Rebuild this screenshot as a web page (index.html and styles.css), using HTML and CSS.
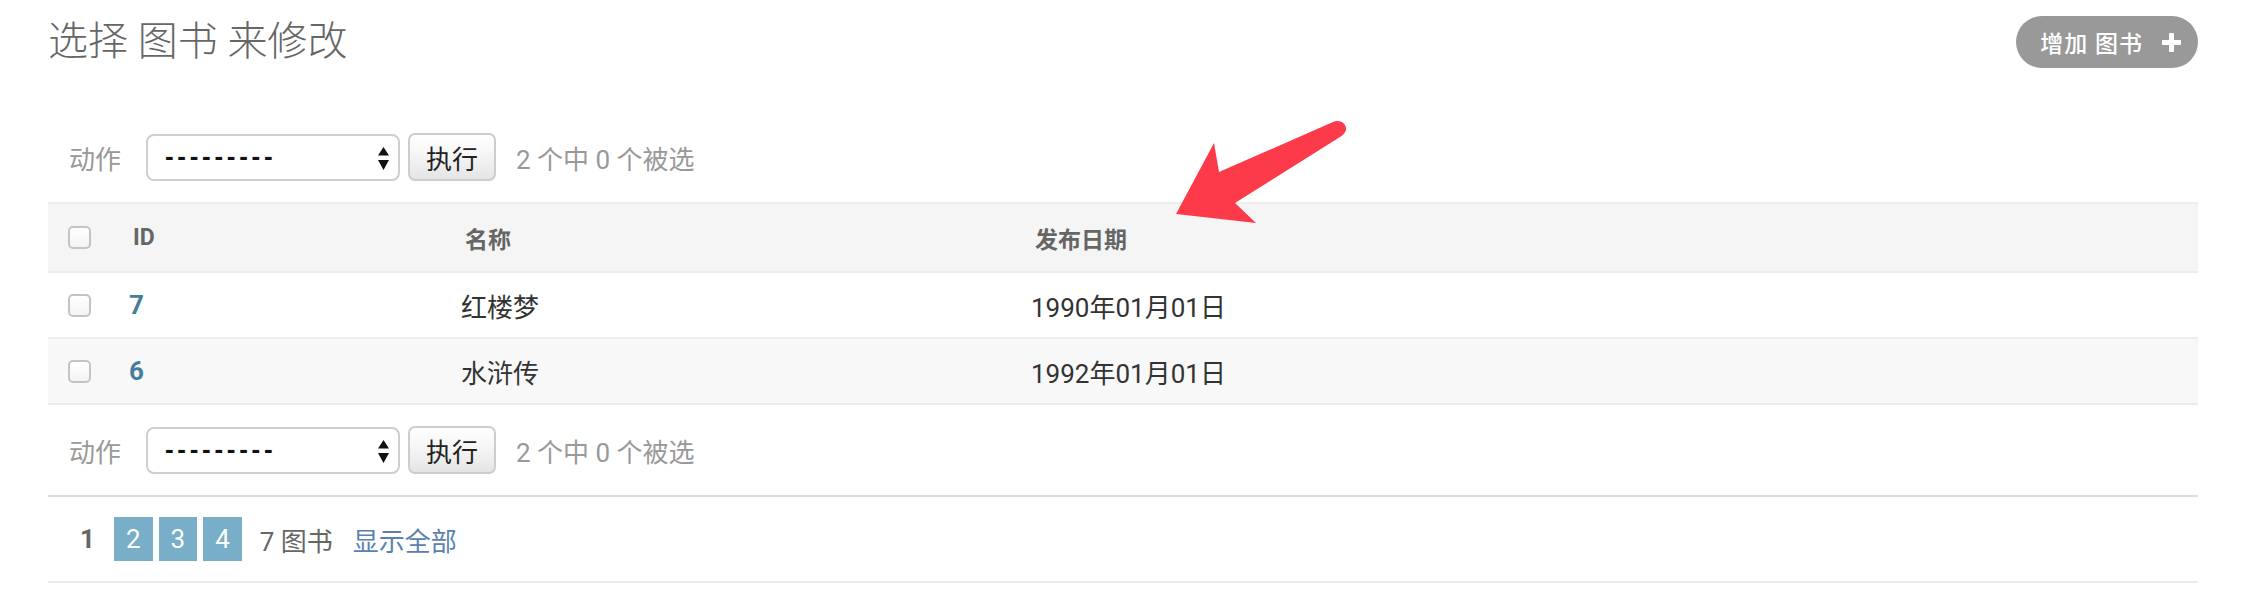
FILE: index.html
```html
<!DOCTYPE html>
<html lang="zh-CN">
<head>
<meta charset="utf-8">
<title>选择 图书 来修改</title>
<link rel="stylesheet" href="styles.css">
</head>
<body>
<div class="page">
  <header class="top">
    <h1 class="title">选择 图书 来修改</h1>
    <a class="addlink" href="#">增加 图书
      <svg class="plus" viewBox="0 0 19 19" width="19" height="19" aria-hidden="true"><path d="M7 0.8 Q7 0 7.8 0 H11.2 Q12 0 12 0.8 V7 H18.2 Q19 7 19 7.8 V11.2 Q19 12 18.2 12 H12 V18.2 Q12 19 11.2 19 H7.8 Q7 19 7 18.2 V12 H0.8 Q0 12 0 11.2 V7.8 Q0 7 0.8 7 H7 Z" fill="#fff"/></svg>
    </a>
  </header>

  <div class="actions">
    <span class="act-label">动作</span>
    <span class="select">
      <span class="dashes">---------</span>
      <svg class="updown" viewBox="0 0 11 23" width="11" height="23" aria-hidden="true"><path d="M0 8.5 L5.5 0 L11 8.5 Z M0 13 L11 13 L5.5 23 Z" fill="#111"/></svg>
    </span>
    <button class="go" type="button">执行</button>
    <span class="counter">2 个中 0 个被选</span>
  </div>

  <table class="result">
    <colgroup>
      <col class="c-cb"><col class="c-id"><col class="c-name"><col>
    </colgroup>
    <thead>
      <tr>
        <th class="cb"><input class="check" type="checkbox"></th>
        <th>ID</th>
        <th>名称</th>
        <th>发布日期</th>
      </tr>
    </thead>
    <tbody>
      <tr class="row1">
        <td class="cb"><input class="check" type="checkbox"></td>
        <td><a class="idlink" href="#">7</a></td>
        <td>红楼梦</td>
        <td>1990年01月01日</td>
      </tr>
      <tr class="row2">
        <td class="cb"><input class="check" type="checkbox"></td>
        <td><a class="idlink" href="#">6</a></td>
        <td>水浒传</td>
        <td>1992年01月01日</td>
      </tr>
    </tbody>
  </table>

  <div class="actions">
    <span class="act-label">动作</span>
    <span class="select">
      <span class="dashes">---------</span>
      <svg class="updown" viewBox="0 0 11 23" width="11" height="23" aria-hidden="true"><path d="M0 8.5 L5.5 0 L11 8.5 Z M0 13 L11 13 L5.5 23 Z" fill="#111"/></svg>
    </span>
    <button class="go" type="button">执行</button>
    <span class="counter">2 个中 0 个被选</span>
  </div>

  <div class="paginator">
    <span class="this-page">1</span>
    <a class="pg" href="#">2</a>
    <a class="pg" href="#">3</a>
    <a class="pg" href="#">4</a>
    <span class="total">7 图书</span>
    <a class="showall" href="#">显示全部</a>
  </div>

  <svg class="arrow" viewBox="0 0 180 110" width="180" height="110" aria-hidden="true">
    <path d="M6 96 L44 25 L49 54 L163 4 C170 1 177 6 176 12 C175 15 173 17 170 19 L65 85 L86 105 Z" fill="#fd3a4a"/>
  </svg>
</div>
</body>
</html>
```

FILE: styles.css
```css
* { box-sizing: border-box; }

html, body {
  margin: 0;
  padding: 0;
  background: #fff;
}

body {
  font-family: Roboto, "Noto Sans CJK SC", sans-serif;
  color: #333;
}

.page {
  position: relative;
  padding: 0 50px 0 48px;
}

/* header */
.top {
  display: flex;
  align-items: flex-start;
  justify-content: space-between;
  height: 112px;
  padding-top: 16px;
}

.title {
  margin: 0;
  height: 52px;
  line-height: 52px;
  font-size: 40px;
  font-weight: 300;
  color: #666;
  white-space: pre;
}

.addlink {
  display: flex;
  align-items: center;
  height: 52px;
  padding: 0 17px 0 24px;
  border-radius: 26px;
  background: #999;
  color: #fff;
  text-decoration: none;
  font-size: 23px;
  font-weight: 500;
  letter-spacing: 1px;
}

.plus {
  margin-left: 19px;
  display: block;
}

/* action bars */
.actions {
  display: flex;
  align-items: center;
  height: 90px;
  padding-left: 21px;
  color: #999;
  font-size: 26px;
}

.act-label {
  color: #999;
  margin-right: 25px;
}

.select {
  position: relative;
  display: flex;
  align-items: center;
  width: 254px;
  height: 47px;
  padding-left: 17px;
  border: 2px solid #cfcfcf;
  border-radius: 8px;
  background: #fff;
}

.dashes {
  font-family: "Liberation Sans", sans-serif;
  font-size: 26px;
  font-weight: 700;
  letter-spacing: 3.7px;
  color: #111;
  margin-top: -2px;
}

.updown {
  position: absolute;
  right: 9px;
  top: 11px;
}

.go {
  margin-left: 8px;
  width: 88px;
  height: 48px;
  padding: 0;
  border: 2px solid #cdcdcd;
  border-radius: 7px;
  background: linear-gradient(#ffffff, #f4f4f4 50%, #e4e4e4);
  font-family: Roboto, "Noto Sans CJK SC", sans-serif;
  font-size: 26px;
  color: #222;
}

.counter {
  margin-left: 20px;
  color: #999;
}

/* table */
.result {
  width: 100%;
  border-collapse: collapse;
  table-layout: fixed;
}

.c-cb { width: 61px; }
.c-id { width: 332px; }
.c-name { width: 570px; }

.result th {
  height: 69px;
  padding: 0 0 0 24px;
  text-align: left;
  background: #f5f5f5;
  border-top: 2px solid #ededed;
  border-bottom: 2px solid #ededed;
  font-size: 23px;
  font-weight: 700;
  color: #666;
}

.result td {
  height: 66px;
  padding: 0 0 0 20px;
  border-bottom: 2px solid #ededed;
  font-size: 26px;
  color: #333;
}

.result th.cb,
.result td.cb {
  padding-left: 20px;
}

.row2 td { background: #f8f8f8; }

.check {
  -webkit-appearance: none;
  appearance: none;
  display: block;
  margin: 0;
  width: 23px;
  height: 23px;
  border: 2px solid #c4c4c4;
  border-radius: 5px;
  background: linear-gradient(#ffffff, #f3f3f3);
}

.idlink {
  color: #447e9b;
  font-weight: 700;
  text-decoration: none;
}

/* pagination */
.paginator {
  display: flex;
  align-items: center;
  height: 88px;
  padding-left: 20px;
  border-top: 2px solid #dcdcdc;
  border-bottom: 2px solid #ececec;
  font-size: 26px;
  color: #666;
}

.this-page {
  padding: 0 12px;
  font-weight: 700;
  color: #666;
  margin-right: 7px;
}

.pg {
  display: block;
  height: 44px;
  line-height: 44px;
  padding: 0 12px;
  margin-right: 6px;
  background: #79aec8;
  color: #fff;
  text-decoration: none;
}

.total {
  margin-left: 12px;
  color: #666;
}

.showall {
  margin-left: 20px;
  color: #5b80b2;
  text-decoration: none;
}

/* annotation arrow */
.arrow {
  position: absolute;
  left: 1170px;
  top: 118px;
  pointer-events: none;
}
```
